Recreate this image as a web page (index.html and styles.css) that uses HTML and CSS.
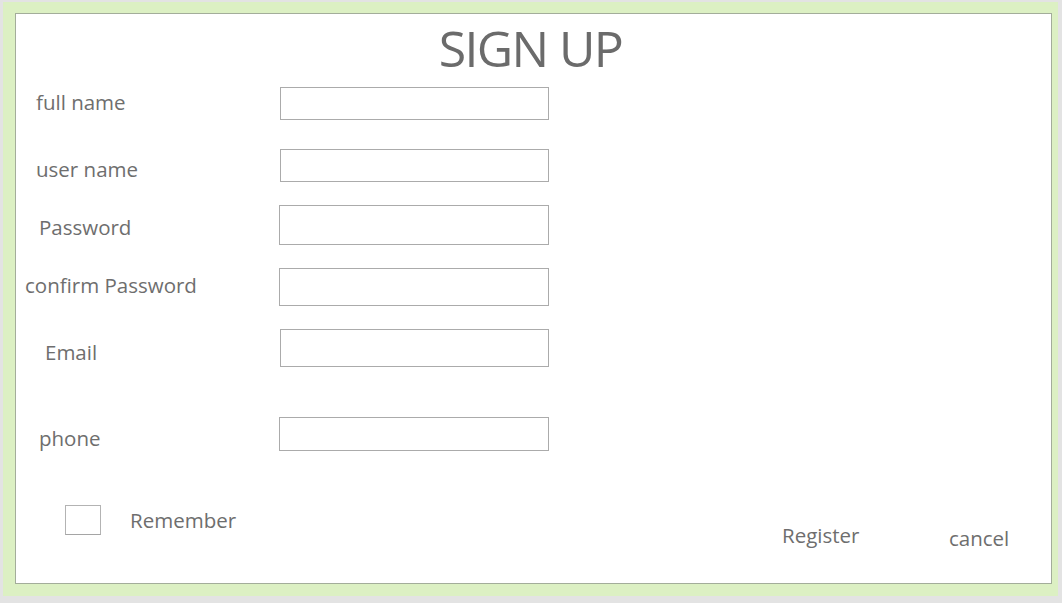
FILE: index.html
```html
<!DOCTYPE html>
<html>
<head>
<meta charset="utf-8">
<title>Sign Up</title>
<link rel="stylesheet" href="styles.css">
</head>
<body>
<div class="frame">
  <div class="panel">
    <h1 class="title">SIGN UP</h1>
    <div class="form">
      <div class="row r1">
        <label class="label l-full">full name</label>
        <div class="field f-1"></div>
      </div>
      <div class="row r2">
        <label class="label l-user">user name</label>
        <div class="field f-1"></div>
      </div>
      <div class="row r3">
        <label class="label l-pass">Password</label>
        <div class="field f-0 h40"></div>
      </div>
      <div class="row r4">
        <label class="label l-confirm">confirm Password</label>
        <div class="field f-0 h38"></div>
      </div>
      <div class="row r5">
        <label class="label l-email">Email</label>
        <div class="field f-1 h38"></div>
      </div>
      <div class="row r6">
        <label class="label l-phone">phone</label>
        <div class="field f-0 h34"></div>
      </div>
    </div>
    <div class="actions">
      <div class="check"></div>
      <span class="remember">Remember</span>
      <span class="btn register">Register</span>
      <span class="btn cancel">cancel</span>
    </div>
  </div>
</div>
</body>
</html>
```

FILE: styles.css
```css
html, body {
  margin: 0;
  padding: 0;
}
body {
  background: #e3e3e3;
  font-family: "Open Sans", "Noto Sans", sans-serif;
  color: #6e6e6e;
  width: 1062px;
  height: 603px;
  overflow: hidden;
}
.frame {
  box-sizing: border-box;
  margin: 2px 0 0 3px;
  width: 1055px;
  height: 594px;
  padding: 11px 6px 12px 12px;
  background: #dcf0c3;
}
.panel {
  box-sizing: border-box;
  width: 1037px;
  height: 571px;
  background: #ffffff;
  border: 1px solid #a3ad9a;
}
.title {
  margin: 4px 0 0 0;
  height: 60px;
  font-size: 50px;
  line-height: 60px;
  font-weight: 400;
  text-align: center;
  color: #6b6b6b;
  letter-spacing: -1.6px;
  padding-right: 6px;
}
.form {
  display: flex;
  flex-direction: column;
  margin-top: 9px;
}
.row {
  display: flex;
  align-items: flex-start;
}
.r2 { margin-top: 29px; }
.r3 { margin-top: 23px; }
.r4 { margin-top: 23px; }
.r5 { margin-top: 23px; }
.r6 { margin-top: 50px; }
.label {
  box-sizing: border-box;
  width: 263px;
  font-size: 20.5px;
  line-height: 20px;
  white-space: nowrap;
}
.l-full { padding-left: 20px; margin-top: 5px; }
.l-user { padding-left: 20px; margin-top: 10px; }
.l-pass { padding-left: 23px; margin-top: 12px; }
.l-confirm { padding-left: 9px; margin-top: 7px; }
.l-email { padding-left: 29px; margin-top: 13px; }
.l-phone { padding-left: 23px; margin-top: 11px; }
.field {
  box-sizing: border-box;
  height: 33px;
  border: 1px solid #ababab;
  background: #fff;
}
.f-1 { margin-left: 1px; width: 269px; }
.f-0 { margin-left: 0; width: 270px; }
.h40 { height: 40px; }
.h38 { height: 38px; }
.h34 { height: 34px; }
.actions {
  display: flex;
  align-items: flex-start;
  margin-top: 54px;
  font-size: 20.5px;
  line-height: 20px;
}
.check {
  box-sizing: border-box;
  width: 36px;
  height: 30px;
  margin-left: 49px;
  border: 1px solid #b3b3b3;
  border-bottom-color: #a5a5a5;
  background: #fff;
}
.remember {
  margin-left: 29px;
  margin-top: 5px;
}
.btn {
  white-space: nowrap;
}
.register {
  margin-left: auto;
  width: 120px;
  margin-top: 20px;
  padding-left: 2px;
}
.cancel {
  margin-left: 47px;
  width: 98px;
  margin-right: 4px;
  margin-top: 23px;
}
```
